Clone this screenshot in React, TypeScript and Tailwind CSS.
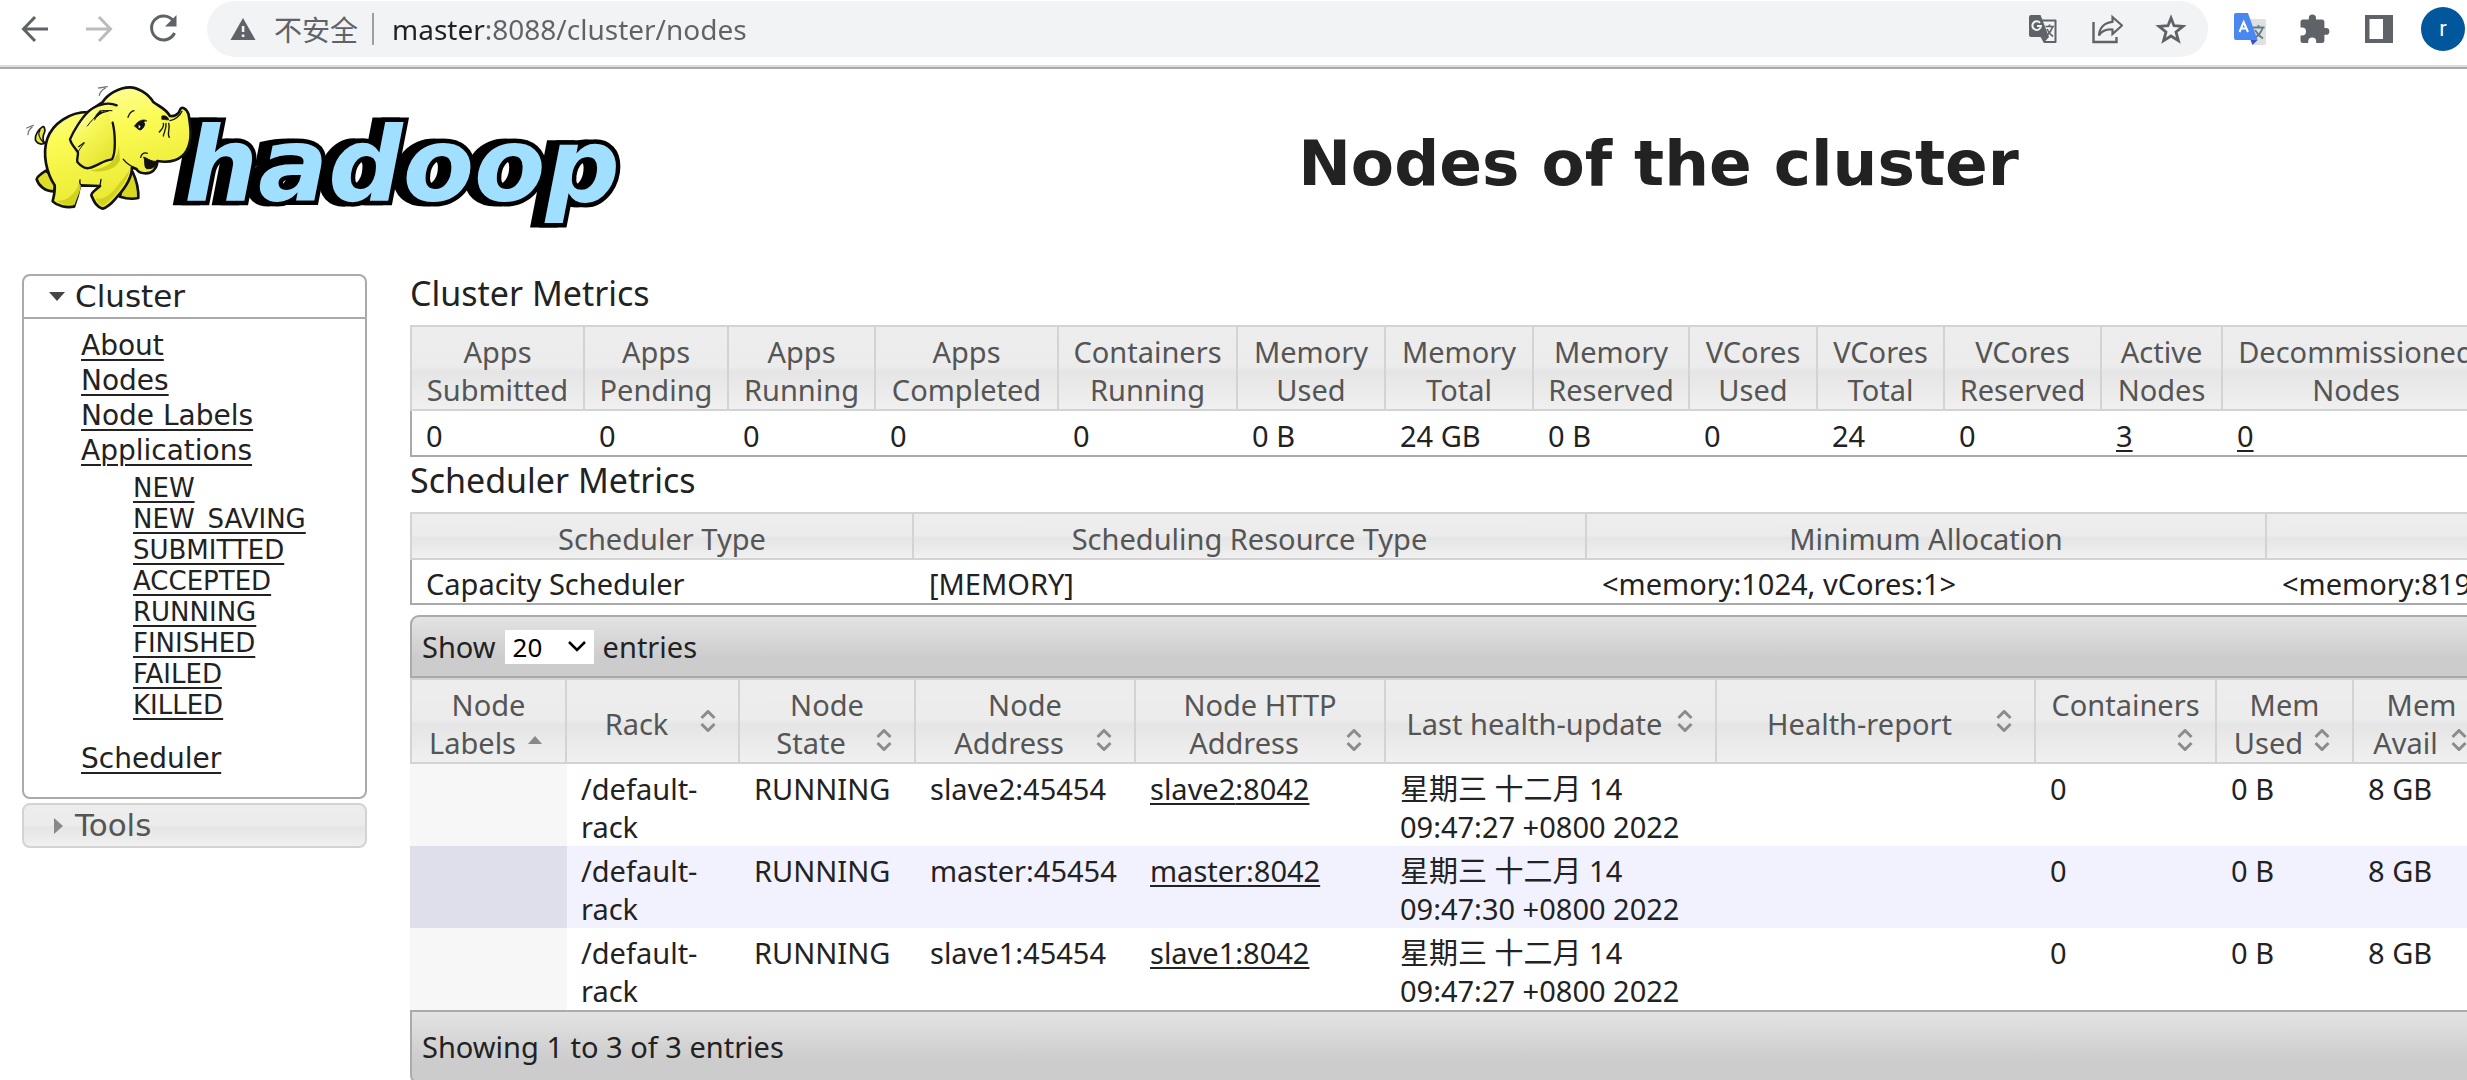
import React from "react";

const GRAD_HEAD =
  "bg-[linear-gradient(#ededed_0%,#ececec_48%,#e5e5e5_54%,#f0f0f0_100%)]";

/* ---------- browser bar ---------- */

function IconButton({ label, className, children }: { label: string; className?: string; children: React.ReactNode }) {
  return (
    <button type="button" aria-label={label} className={`flex h-8 w-8 shrink-0 items-center justify-center ${className ?? ""}`}>
      {children}
    </button>
  );
}

function BrowserBar() {
  return (
    <div className="border-b-2 border-[#aaaaaa]">
      <div className="flex h-[67px] items-start border-b-2 border-[#dddddd] pt-px pr-[2px] pl-5">
        <div className="flex h-14 items-center gap-8">
          <IconButton label="Back">
            <svg viewBox="0 0 32 32" className="h-8 w-8" fill="none" stroke="#5f6368" strokeWidth="3">
              <path d="M28 16H4M15 4L3.500 16L15 28" />
            </svg>
          </IconButton>
          <IconButton label="Forward">
            <svg viewBox="0 0 32 32" className="h-8 w-8" fill="none" stroke="#babcbe" strokeWidth="3">
              <path d="M2 16H26M15 4L26.500 16L15 28" />
            </svg>
          </IconButton>
          <IconButton label="Reload">
            <svg viewBox="0 0 32 32" className="h-8 w-8">
              <path d="M25 7.500A12 12 0 1 0 26.500 20" fill="none" stroke="#5f6368" strokeWidth="3" />
              <path d="M28.500 2V13.500H17z" fill="#5f6368" />
            </svg>
          </IconButton>
        </div>
        <div className="ml-[27px] flex h-14 min-w-0 flex-1 items-center rounded-full bg-[#f1f3f4] pr-[21px] pl-[23px]">
          <svg viewBox="0 0 26 24" className="h-6 w-[26px] shrink-0">
            <path d="M13 1L25.500 23H.500z" fill="#5f6368" />
            <path d="M11.800 9h2.600v6h-2.600zM11.800 17.500h2.600v2.500h-2.600z" fill="#f1f3f4" />
          </svg>
          <label htmlFor="url" className="ml-[18px] shrink-0 font-['Noto_Sans_CJK_SC',sans-serif] text-[28px] leading-8 text-[#5f6368]">
            不安全
          </label>
          <span className="ml-[14px] h-8 w-[2px] shrink-0 bg-[#9aa0a6]" />
          <input
            id="url"
            type="text"
            defaultValue="master:8088/cluster/nodes"
            className="ml-[18px] h-10 min-w-0 flex-1 bg-[linear-gradient(90deg,#202124_93px,#5f6368_93px)] bg-clip-text font-['Noto_Sans',sans-serif] text-[28px] text-transparent outline-none"
          />
          <div className="flex items-center gap-8">
            <IconButton label="Translate this page">
              <svg viewBox="0 0 32 32" className="h-8 w-8">
                <path d="M13 7.500H28.500V29H17.500L13 21" fill="#f1f3f4" stroke="#5f6368" strokeWidth="2" strokeLinejoin="round" />
                <path d="M4 2H13.500L22 24H4Q2 24 2 22V4Q2 2 4 2z" fill="#5f6368" />
                <path d="M17 29.500L16 24H22z" fill="#5f6368" />
                <path d="M18.500 13.500H27M22.500 11.500V13.500M25.500 14Q24 19 19.500 23M20 16Q22 20.500 26 23.500" fill="none" stroke="#5f6368" strokeWidth="1.700" />
                <path d="M13 9.800A4.300 4.300 0 1 0 14 13H10" fill="none" stroke="#f1f3f4" strokeWidth="2" />
              </svg>
            </IconButton>
            <IconButton label="Share">
              <svg viewBox="0 0 32 32" className="h-8 w-8" fill="none" stroke="#5f6368" strokeWidth="2.400">
                <path d="M2.500 9V29H25.500V24" />
                <path d="M21.500 4L31 12.500L21.500 21V16.500C15 16 10.500 18 8 22.500C8.500 14.500 13.500 9.500 21.500 8.800z" strokeWidth="2.200" />
              </svg>
            </IconButton>
            <IconButton label="Bookmark">
              <svg viewBox="0 0 32 32" className="h-8 w-8" fill="none" stroke="#5f6368" strokeWidth="2.800">
                <path d="M16 5L19 12.700L28 13.300L21 19L23.400 27.600L16 23L8.600 27.600L11 19L4 13.300L13 12.700z" />
              </svg>
            </IconButton>
          </div>
        </div>
        <div className="ml-[26px] flex h-14 shrink-0 items-center">
          <IconButton label="Translate">
            <svg viewBox="0 0 32 32" className="h-8 w-8">
              <path d="M13 6H30Q32 6 32 8V30Q32 32 30 32H18z" fill="#e0e0e0" />
              <path d="M19 14.500H30.500M24.500 12V14.500M28.500 15Q27 21 20 25.500M21 17Q24 22.500 29 25.500" fill="none" stroke="#607d8b" strokeWidth="1.800" />
              <path d="M16.500 27H23.500L18.500 32z" fill="#3a4fc4" />
              <path d="M2 0H14L23.500 27H2Q0 27 0 25V2Q0 0 2 0z" fill="#4a88f0" />
              <path d="M5.500 19L9.700 9L14 19M7 15.500H12.500" fill="none" stroke="#fff" strokeWidth="2" />
            </svg>
          </IconButton>
          <IconButton label="Extensions" className="ml-[33px]">
            <svg viewBox="0 0 32 32" className="h-8 w-8">
              <path
                d="M27 15h-1.600V9.200Q25.400 6.500 22.800 6.500H17V5a3.600 3.600 0 0 0-7.200 0V6.500H4Q1.500 6.500 1.500 9V14.600H3a4 4 0 0 1 0 8H1.500V27.500Q1.500 30 4 30H9.200V28.500a4 4 0 0 1 8 0V30h5.600Q25.400 30 25.400 27.500V21.800H27a3.400 3.400 0 0 0 0-6.800z"
                fill="#5f6368"
              />
            </svg>
          </IconButton>
          <IconButton label="Side panel" className="ml-8">
            <svg viewBox="0 0 32 32" className="h-8 w-8">
              <path d="M2 2H30V30H2zM6.500 6V26H20V6z" fill="#5f6368" fillRule="evenodd" />
            </svg>
          </IconButton>
          <button
            type="button"
            aria-label="Profile"
            className="ml-[26px] flex h-11 w-11 items-center justify-center rounded-full bg-[#01579b] font-[Roboto,sans-serif] text-[22px] leading-none text-white"
          >
            r
          </button>
        </div>
      </div>
    </div>
  );
}

/* ---------- logo ---------- */

function HadoopLogo() {
  return (
    <svg viewBox="22 82 600 148" className="h-[148px] w-[600px]" role="img" aria-label="hadoop">
      <defs>
        <linearGradient id="skin" x1="0.3" y1="0" x2="0.6" y2="1">
          <stop offset="0" stopColor="#fdfda0" />
          <stop offset="0.35" stopColor="#fbfb55" />
          <stop offset="1" stopColor="#e6e62c" />
        </linearGradient>
        <linearGradient id="ear" x1="0" y1="0" x2="0.7" y2="1">
          <stop offset="0" stopColor="#ffffe0" />
          <stop offset="0.45" stopColor="#f8f85a" />
          <stop offset="1" stopColor="#e3e32e" />
        </linearGradient>
      </defs>
      <text
        x="184"
        y="201"
        className="font-['DejaVu_Sans',sans-serif] text-[104px] font-bold italic drop-shadow-[-9px_0_0_#000]"
        fill="#a0dfff"
        stroke="#000"
        strokeWidth="9"
        paintOrder="stroke"
      >
        hadoop
      </text>
      <g transform="translate(20 80) scale(0.3333)" stroke="#111" strokeWidth="8" strokeLinejoin="round" strokeLinecap="round">
        <path d="M78 272C62 282 50 290 50 298C56 318 76 334 102 334L110 300z" fill="#dede28" />
        <path d="M338 276C352 306 356 330 355 354C338 358 318 356 300 350L310 300z" fill="#d8d820" />
        <path d="M76 190C66 184 68 168 74 156C76 146 72 138 68 140C56 148 44 164 46 180C52 192 64 194 76 190z" fill="#e8e840" strokeWidth="5" />
        <path d="M60 150C52 160 58 174 70 188" fill="none" strokeWidth="4" />
        <path
          d="M203 96C150 96 98 130 82 176C66 222 80 280 104 316C106 336 100 352 98 364C112 378 138 384 162 380C170 360 176 340 180 316L240 318C228 330 214 336 214 346C222 364 228 380 248 386C268 380 278 366 290 352C320 320 336 290 336 262L350 268C358 282 386 284 400 272C410 262 412 250 412 243C450 250 484 240 500 212C518 180 512 140 506 104C500 84 484 78 480 90C476 104 462 110 450 108C436 84 414 78 400 66C384 40 352 22 330 22C296 22 262 44 248 66z"
          fill="url(#skin)"
        />
        <path d="M180 300C190 320 172 350 164 374C142 376 124 372 108 362C134 366 150 350 160 340C170 330 176 314 180 300z" fill="#d2d220" stroke="none" />
        <path d="M330 268C324 300 290 346 250 378C236 372 230 362 228 354C246 364 276 340 290 320C304 302 320 284 330 268z" fill="#d2d220" stroke="none" />
        <path d="M296 190C300 230 270 268 210 270C236 282 290 270 300 240z" fill="#cfcf20" stroke="none" />
        <path d="M204 92C236 74 268 64 292 84C250 88 280 150 284 178C286 204 286 222 276 238C252 238 222 264 206 264C190 264 172 254 172 242C172 230 176 222 174 216C166 206 154 192 150 178C162 154 186 110 204 92z" fill="url(#ear)" stroke="none" />
        <path d="M290 76C262 64 226 76 206 94C184 114 160 154 150 178C154 196 168 206 174 218C174 230 170 238 172 246C186 262 200 266 208 264C232 258 252 240 276 238C288 220 286 160 278 128" fill="none" strokeWidth="7" />
        <path d="M174 216C180 206 186 198 192 190M276 92C244 88 224 110 202 138M264 94C240 98 230 108 224 120M238 94C250 90 256 92 266 92" fill="none" strokeWidth="3" />
        <path d="M240 92Q228 102 222 116L246 98z" fill="#111" strokeWidth="2" />
        <path d="M324 112C328 100 334 94 342 92" fill="none" strokeWidth="4" />
        <path d="M344 138C352 122 370 116 380 122C372 132 376 142 362 150C352 150 350 142 344 138z" fill="#111" strokeWidth="2" />
        <path d="M356 134l6 6-6 6zM372 126l6-2v10z" fill="#fff" stroke="none" />
        <path d="M426 108C436 104 446 112 446 120L426 118z" fill="#111" strokeWidth="2" />
        <path d="M430 130C434 140 426 148 418 156M438 130C440 146 432 156 430 168M446 130C452 144 440 160 448 172M450 122C464 120 480 108 486 94" fill="none" strokeWidth="4" />
        <path d="M372 232C380 232 390 246 412 244C410 256 400 268 380 266C372 262 376 246 372 232z" fill="#111" strokeWidth="3" />
        <path d="M362 232C364 222 372 216 382 220M310 238C320 250 334 260 350 266M180 300C178 308 180 316 190 318M240 318L243 298M176 200L192 188" fill="none" strokeWidth="4" />
        <path d="M236 24L262 20M238 46C240 34 246 30 256 24M20 144L40 136M24 164C24 154 28 148 36 142" fill="none" stroke="#777" strokeWidth="4" />
      </g>
    </svg>
  );
}

/* ---------- sidebar ---------- */

const STATES = ["NEW", "NEW_SAVING", "SUBMITTED", "ACCEPTED", "RUNNING", "FINISHED", "FAILED", "KILLED"];

function NavLink({ children }: { children: string }) {
  return (
    <a href="#" className="underline decoration-2 underline-offset-4">
      {children}
    </a>
  );
}

function Sidebar() {
  return (
    <nav className="w-[345px] shrink-0 font-['DejaVu_Sans',sans-serif] text-[28px] leading-[35px] text-[#222222]">
      <div className="rounded-lg border-2 border-[#aaaaaa] bg-white">
        <button type="button" className="flex h-[43px] w-full items-center border-b-2 border-[#aaaaaa] pl-[25px] text-left text-[31px]">
          <svg viewBox="0 0 16 9" className="mr-[10px] h-[9px] w-4">
            <path d="M0 0H16L8 9z" fill="#454545" />
          </svg>
          Cluster
        </button>
        <ul className="pt-[9px] pb-[21px] pl-[57px]">
          <li><NavLink>About</NavLink></li>
          <li><NavLink>Nodes</NavLink></li>
          <li><NavLink>Node Labels</NavLink></li>
          <li>
            <NavLink>Applications</NavLink>
            <ul className="pt-[5px] pb-5 pl-[52px] text-[26px] leading-[31px]">
              {STATES.map((s) => (
                <li key={s}><NavLink>{s}</NavLink></li>
              ))}
            </ul>
          </li>
          <li><NavLink>Scheduler</NavLink></li>
        </ul>
      </div>
      <button
        type="button"
        className={`mt-1 flex h-[45px] w-full items-center rounded-lg border-2 border-[#d3d3d3] pl-[30px] text-left text-[31px] text-[#555555] ${GRAD_HEAD}`}
      >
        <svg viewBox="0 0 9 16" className="mr-3 h-4 w-[9px]">
          <path d="M0 0L9 8L0 16z" fill="#888888" />
        </svg>
        Tools
      </button>
    </nav>
  );
}

/* ---------- tables ---------- */

const CLUSTER = [
  { head: ["Apps", "Submitted"], value: "0", w: "w-[175px]" },
  { head: ["Apps", "Pending"], value: "0", w: "w-[144px]" },
  { head: ["Apps", "Running"], value: "0", w: "w-[147px]" },
  { head: ["Apps", "Completed"], value: "0", w: "w-[183px]" },
  { head: ["Containers", "Running"], value: "0", w: "w-[179px]" },
  { head: ["Memory", "Used"], value: "0 B", w: "w-[148px]" },
  { head: ["Memory", "Total"], value: "24 GB", w: "w-[148px]" },
  { head: ["Memory", "Reserved"], value: "0 B", w: "w-[156px]" },
  { head: ["VCores", "Used"], value: "0", w: "w-[128px]" },
  { head: ["VCores", "Total"], value: "24", w: "w-[127px]" },
  { head: ["VCores", "Reserved"], value: "0", w: "w-[157px]" },
  { head: ["Active", "Nodes"], value: "3", w: "w-[121px]", link: true },
  { head: ["Decommissioned", "Nodes"], value: "0", w: "w-auto", link: true },
];

const SCHEDULER = [
  { head: "Scheduler Type", value: "Capacity Scheduler", w: "w-[504px]" },
  { head: "Scheduling Resource Type", value: "[MEMORY]", w: "w-[673px]" },
  { head: "Minimum Allocation", value: "<memory:1024, vCores:1>", w: "w-[680px]" },
  { head: "", value: "<memory:8192, vCores:8>", w: "w-auto" },
];

const NODE_COLUMNS = [
  { first: "Node", last: "Labels", w: "w-[157px]", sorted: true },
  { first: "", last: "Rack", w: "w-[173px]" },
  { first: "Node", last: "State", w: "w-[176px]" },
  { first: "Node", last: "Address", w: "w-[220px]" },
  { first: "Node HTTP", last: "Address", w: "w-[250px]" },
  { first: "", last: "Last health-update", w: "w-[331px]" },
  { first: "", last: "Health-report", w: "w-[319px]" },
  { first: "Containers", last: "", w: "w-[181px]" },
  { first: "Mem", last: "Used", w: "w-[137px]" },
  { first: "Mem", last: "Avail", w: "w-auto" },
];

const NODES = [
  { name: "slave2", time: "09:47:27" },
  { name: "master", time: "09:47:30" },
  { name: "slave1", time: "09:47:27" },
];

const TABLE = "w-full table-fixed border-separate border-spacing-0 whitespace-nowrap";
const TH = `border-b-2 border-r-2 border-[#d3d3d3] pt-[6px] text-center align-middle font-normal text-[#555555] ${GRAD_HEAD}`;

function SortIcon({ sorted }: { sorted?: boolean }) {
  return (
    <span className="flex h-8 w-8 shrink-0 items-center justify-center">
      {sorted ? (
        <svg viewBox="0 0 14 8" className="h-2 w-[14px]">
          <path d="M0 8L7 0L14 8z" fill="#888888" />
        </svg>
      ) : (
        <svg viewBox="0 0 16 22" className="h-[22px] w-4" fill="none" stroke="#8c8c8c" strokeWidth="3">
          <path d="M1.500 8L8 1.500L14.500 8M1.500 14L8 20.500L14.500 14" />
        </svg>
      )}
    </span>
  );
}

function SectionTitle({ children }: { children: string }) {
  return <h3 className="text-[34px] leading-[46px]">{children}</h3>;
}

function ValueLink({ children }: { children: React.ReactNode }) {
  return (
    <a href="#" className="underline decoration-2 underline-offset-3">
      {children}
    </a>
  );
}

function ClusterMetrics() {
  return (
    <table className={`${TABLE} mt-[9px] border-b-2 border-[#aaaaaa]`}>
      <colgroup>
        {CLUSTER.map((c, i) => <col key={i} className={c.w} />)}
      </colgroup>
      <thead>
        <tr>
          {CLUSTER.map((c, i) => (
            <th key={i} className={`${TH} border-t-2 first:border-l-2`}>
              {c.head[0]}
              <br />
              {c.head[1]}
            </th>
          ))}
        </tr>
      </thead>
      <tbody>
        <tr>
          {CLUSTER.map((c, i) => (
            <td key={i} className="border-[#aaaaaa] pt-[6px] pl-[14px] first:border-l-2">
              {c.link ? <ValueLink>{c.value}</ValueLink> : c.value}
            </td>
          ))}
        </tr>
      </tbody>
    </table>
  );
}

function SchedulerMetrics() {
  return (
    <table className={`${TABLE} mt-[9px] border-b-2 border-[#aaaaaa]`}>
      <colgroup>
        {SCHEDULER.map((c, i) => <col key={i} className={c.w} />)}
      </colgroup>
      <thead>
        <tr>
          {SCHEDULER.map((c, i) => (
            <th key={i} className={`${TH} border-t-2 first:border-l-2`}>{c.head}</th>
          ))}
        </tr>
      </thead>
      <tbody>
        <tr>
          {SCHEDULER.map((c, i) => (
            <td key={i} className="border-[#aaaaaa] pt-[5px] pl-[15px] first:border-l-2 first:pl-[14px]">{c.value}</td>
          ))}
        </tr>
      </tbody>
    </table>
  );
}

function NodesTable() {
  return (
    <section className="mt-[10px]">
      <div className="flex h-[63px] items-center rounded-t-[9px] border-2 border-[#aaaaaa] bg-[linear-gradient(#e3e3e3,#cccccc_70%)] pl-[10px]">
        <label htmlFor="length">Show</label>
        <span className="relative mx-[9px] flex items-center">
          <select
            id="length"
            defaultValue="20"
            className="h-[34px] w-[89px] appearance-none bg-white pl-2 text-[26px] leading-[34px] text-black"
          >
            <option>20</option>
            <option>50</option>
            <option>100</option>
          </select>
          <svg viewBox="0 0 18 11" className="pointer-events-none absolute right-2 h-[11px] w-[18px]" fill="none" stroke="#000" strokeWidth="2.500">
            <path d="M1 1L9 9L17 1" />
          </svg>
        </span>
        <span>entries</span>
      </div>
      <table className={TABLE}>
        <colgroup>
          {NODE_COLUMNS.map((c, i) => <col key={i} className={c.w} />)}
        </colgroup>
        <thead>
          <tr>
            {NODE_COLUMNS.map((c, i) => (
              <th key={i} className={`${TH} border-t-2 px-[14px] first:border-l-2`}>
                <button type="button" className="block w-full">
                  {c.first && <span className="block">{c.first}</span>}
                  <span className="flex h-[38px] items-start">
                    <span className="flex-1">{c.last}</span>
                    <SortIcon sorted={c.sorted} />
                  </span>
                </button>
              </th>
            ))}
          </tr>
        </thead>
        <tbody>
          {NODES.map((n) => (
            <tr key={n.name} className="align-top even:bg-[#f2f2ff] [&>td]:pt-[6px] [&>td]:pl-[14px]">
              <td className={n.name === "master" ? "bg-[#dfdfec]" : "bg-[#f7f7f7]"} />
              <td>/default-<br />rack</td>
              <td>RUNNING</td>
              <td>{n.name}:45454</td>
              <td><ValueLink>{n.name}:8042</ValueLink></td>
              <td>
                星期三 十二月 14
                <br />
                {n.time} +0800 2022
              </td>
              <td />
              <td>0</td>
              <td>0 B</td>
              <td>8 GB</td>
            </tr>
          ))}
        </tbody>
      </table>
      <div className="flex h-[74px] items-center rounded-b-[9px] border-2 border-[#aaaaaa] bg-[linear-gradient(#e3e3e3,#cccccc_70%)] pl-[10px]">
        Showing 1 to 3 of 3 entries
      </div>
    </section>
  );
}

export default function App() {
  return (
    <div className="h-screen overflow-hidden bg-white">
      <BrowserBar />
      <header className="flex h-[189px] items-start pt-[13px] pl-[22px]">
        <div className="w-[828px] shrink-0">
          <HadoopLogo />
        </div>
        <h1 className="flex-1 pt-[46px] text-center font-['DejaVu_Sans',sans-serif] text-[63px] leading-[72px] font-bold whitespace-nowrap text-[#222222]">
          Nodes of the cluster
        </h1>
      </header>
      <div className="flex items-start pl-[22px]">
        <div className="mt-4">
          <Sidebar />
        </div>
        <main className="-mr-6 ml-[43px] min-w-0 flex-1 pt-3 font-['Noto_Sans','Noto_Sans_CJK_SC',sans-serif] text-[29px] leading-[38px] text-[#222222]">
          <SectionTitle>Cluster Metrics</SectionTitle>
          <ClusterMetrics />
          <SectionTitle>Scheduler Metrics</SectionTitle>
          <SchedulerMetrics />
          <NodesTable />
        </main>
      </div>
    </div>
  );
}
